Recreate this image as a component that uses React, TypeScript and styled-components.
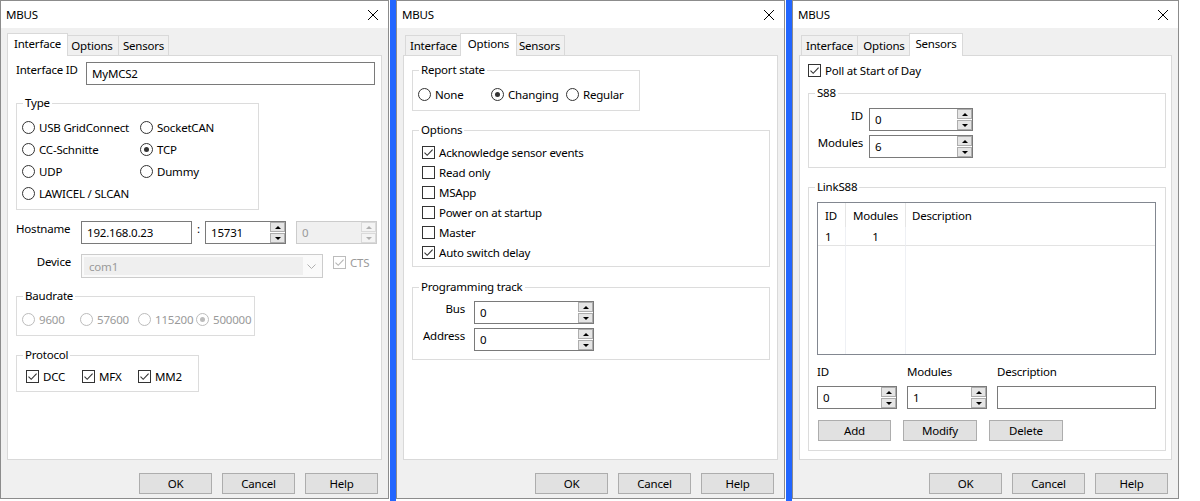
import React from "react";
import styled, { createGlobalStyle } from "styled-components";

const GlobalStyle = createGlobalStyle`
  html, body {
    margin: 0;
    padding: 0;
    background: #ffffff;
  }
  body {
    font-family: "Noto Sans", "Open Sans", sans-serif;
    font-size: 11.5px;
    letter-spacing: -0.2px;
    color: #000;
  }
  * {
    box-sizing: border-box;
  }
`;

const Screen = styled.div`
  display: flex;
  align-items: flex-start;
  width: 1200px;
  height: 501px;
  overflow: hidden;
  background: #fff;
`;

const AccentBar = styled.div`
  flex-shrink: 0;
  width: 6px;
  height: 501px;
  margin-left: 1px;
  background: #2266ff;
`;

const Window = styled.div<{ $width: number }>`
  flex-shrink: 0;
  width: ${(p) => p.$width}px;
  height: 499px;
  border: 1px solid #8c8c8c;
  background: #f0f0f0;
  display: flex;
  flex-direction: column;
`;

const TitleBar = styled.div`
  flex-shrink: 0;
  height: 27px;
  background: #fff;
  display: flex;
  align-items: center;
  justify-content: space-between;
  padding: 0 10px 0 5px;
`;

const TabStrip = styled.div`
  flex-shrink: 0;
  height: 22px;
  margin-top: 5px;
  padding-left: 8px;
  display: flex;
  align-items: flex-end;
`;

const Tab = styled.div<{ $active: boolean; $width: number }>`
  position: relative;
  z-index: ${(p) => (p.$active ? 1 : 0)};
  width: ${(p) => p.$width + (p.$active ? 4 : 0)}px;
  height: ${(p) => (p.$active ? 23 : 20)}px;
  margin: 0 ${(p) => (p.$active ? -2 : 0)}px ${(p) => (p.$active ? -1 : 0)}px;
  padding-bottom: ${(p) => (p.$active ? 3 : 0)}px;
  background: ${(p) => (p.$active ? "#fff" : "#f0f0f0")};
  border: 1px solid #d9d9d9;
  border-bottom: none;
  display: flex;
  align-items: center;
  justify-content: center;
  white-space: nowrap;

  &:not(:first-child) {
    border-left: ${(p) => (p.$active ? "1px solid #d9d9d9" : "none")};
  }
`;

const Panel = styled.div`
  flex-shrink: 0;
  height: 405px;
  margin: 0 6px;
  background: #fff;
  border: 1px solid #d9d9d9;
  padding: 6px 6px 0 8px;
  display: flex;
  flex-direction: column;
  align-items: flex-start;
`;

const ButtonRow = styled.div`
  display: flex;
  justify-content: flex-end;
  gap: 10px;
  padding: 13px 10px 0 0;
`;

const PushButton = styled.button<{ $width?: number }>`
  width: ${(p) => p.$width ?? 73}px;
  height: 21px;
  padding: 0;
  border: 1px solid #adadad;
  background: #e1e1e1;
  font: inherit;
  letter-spacing: inherit;
  color: #000;
`;

const Row = styled.div<{ $top?: number }>`
  display: flex;
  align-items: flex-start;
  margin-top: ${(p) => p.$top ?? 0}px;
`;

const FieldLabel = styled.span<{ $width: number; $right?: boolean; $gap?: number; $muted?: boolean }>`
  flex-shrink: 0;
  width: ${(p) => p.$width}px;
  margin-right: ${(p) => p.$gap ?? 0}px;
  line-height: 16px;
  text-align: ${(p) => (p.$right ? "right" : "left")};
  white-space: nowrap;
  color: ${(p) => (p.$muted ? "#9a9a9a" : "#000")};
`;

const TextBox = styled.div<{ $width?: number }>`
  flex-shrink: 0;
  width: ${(p) => (p.$width ? `${p.$width}px` : "auto")};
  height: 23px;
  border: 1px solid #7a7a7a;
  background: #fff;
  padding: 0 5px;
  display: flex;
  align-items: center;
  white-space: nowrap;
`;

const SpinFrame = styled.div<{ $width: number }>`
  flex-shrink: 0;
  width: ${(p) => p.$width}px;
  height: 23px;
  display: flex;
`;

const SpinValue = styled.div<{ $disabled?: boolean }>`
  flex: 1;
  border: 1px solid ${(p) => (p.$disabled ? "#cccccc" : "#7a7a7a")};
  border-right: none;
  background: ${(p) => (p.$disabled ? "#f0f0f0" : "#fff")};
  color: ${(p) => (p.$disabled ? "#9a9a9a" : "#000")};
  padding-left: 5px;
  display: flex;
  align-items: center;
`;

const SpinButtons = styled.div<{ $disabled?: boolean }>`
  width: 16px;
  display: flex;
  flex-direction: column;
  gap: 1px;
  border: 1px solid ${(p) => (p.$disabled ? "#cccccc" : "#7a7a7a")};
  border-left: none;
  background: ${(p) => (p.$disabled ? "#f0f0f0" : "#fff")};
`;

const SpinButton = styled.span<{ $disabled?: boolean }>`
  flex: 1;
  display: flex;
  align-items: center;
  justify-content: center;
  border: 1px solid ${(p) => (p.$disabled ? "#dadada" : "#adadad")};
  background: ${(p) => (p.$disabled ? "#f4f4f4" : "#e5e5e5")};
`;

const Arrow = styled.span<{ $down?: boolean; $disabled?: boolean }>`
  width: 0;
  height: 0;
  border-left: 3px solid transparent;
  border-right: 3px solid transparent;
  ${(p) =>
    p.$down
      ? `border-top: 3px solid ${p.$disabled ? "#b0b0b0" : "#000"};`
      : `border-bottom: 3px solid ${p.$disabled ? "#b0b0b0" : "#000"};`}
`;

const Colon = styled.span`
  flex-shrink: 0;
  width: 13px;
  line-height: 16px;
  text-align: center;
`;

const ComboFrame = styled.div<{ $width: number }>`
  flex-shrink: 0;
  width: ${(p) => p.$width}px;
  height: 24px;
  border: 1px solid #cccccc;
  background: #fafafa;
  padding: 2px;
  display: flex;
`;

const ComboText = styled.div`
  flex: 1;
  background: #efefef;
  color: #9a9a9a;
  padding-left: 5px;
  display: flex;
  align-items: center;
`;

const ComboArrow = styled.div`
  width: 17px;
  display: flex;
  align-items: center;
  justify-content: center;
`;

const Group = styled.fieldset<{ $width?: number; $top?: number }>`
  margin: ${(p) => p.$top ?? 0}px 0 0;
  padding: 0;
  min-width: 0;
  width: ${(p) => (p.$width ? `${p.$width}px` : "auto")};
  border: 1px solid #dcdcdc;
`;

const GroupTitle = styled.legend`
  margin-left: 6px;
  padding: 0 2px;
  line-height: 16px;
`;

const GroupBody = styled.div<{ $pad: string }>`
  padding: ${(p) => p.$pad};
`;

const ChoiceGrid = styled.div<{ $cols: string; $row: number }>`
  display: grid;
  grid-template-columns: ${(p) => p.$cols};
  grid-auto-rows: ${(p) => p.$row}px;
`;

const Choice = styled.div<{ $disabled?: boolean; $height?: number }>`
  display: flex;
  align-items: center;
  gap: 4px;
  height: ${(p) => (p.$height ? `${p.$height}px` : "100%")};
  white-space: nowrap;
  color: ${(p) => (p.$disabled ? "#9a9a9a" : "#000")};
`;

const RadioCircle = styled.span<{ $checked?: boolean; $disabled?: boolean }>`
  flex-shrink: 0;
  width: 13px;
  height: 13px;
  border-radius: 50%;
  border: 1px solid ${(p) => (p.$disabled ? "#bcbcbc" : "#333")};
  background: #fff;
  display: flex;
  align-items: center;
  justify-content: center;

  &::after {
    content: "";
    display: ${(p) => (p.$checked ? "block" : "none")};
    width: 5px;
    height: 5px;
    border-radius: 50%;
    background: ${(p) => (p.$disabled ? "#bcbcbc" : "#333")};
  }
`;

const CheckSquare = styled.span<{ $disabled?: boolean }>`
  flex-shrink: 0;
  width: 13px;
  height: 13px;
  border: 1px solid ${(p) => (p.$disabled ? "#bcbcbc" : "#333")};
  background: #fff;
  display: flex;
  align-items: center;
  justify-content: center;
`;

const ListView = styled.div`
  width: 100%;
  height: 153px;
  border: 1px solid #828790;
  background: #fff;
  display: grid;
  grid-template-columns: 28px 60px 1fr;
  grid-template-rows: 24px 19px 1fr;
`;

const HeadCell = styled.div<{ $last?: boolean }>`
  padding-left: ${(p) => (p.$last ? 6 : 7)}px;
  display: flex;
  align-items: center;
  white-space: nowrap;
  border-right: ${(p) => (p.$last ? "none" : "1px solid #e5e5e5")};
`;

const DataCell = styled.div<{ $center?: boolean; $last?: boolean }>`
  padding-left: ${(p) => (p.$center ? 0 : 7)}px;
  display: flex;
  align-items: center;
  justify-content: ${(p) => (p.$center ? "center" : "flex-start")};
  border-bottom: 1px solid #e3e3e3;
  border-right: ${(p) => (p.$last ? "none" : "1px solid #eef0f4")};
`;

const FillCell = styled.div<{ $last?: boolean }>`
  border-right: ${(p) => (p.$last ? "none" : "1px solid #eef0f4")};
`;

const EntryGrid = styled.div`
  display: grid;
  grid-template-columns: 80px 80px 1fr;
  column-gap: 10px;
  row-gap: 6px;
  margin-top: 9px;
`;

const EntryLabel = styled.span`
  line-height: 16px;
`;

const ActionRow = styled.div`
  display: flex;
  gap: 12px;
  margin: 11px 0 0 1px;
`;

const CheckMark = ({ disabled }: { disabled?: boolean }) => (
  <svg width="11" height="11" viewBox="0 0 11 11">
    <path d="M1.5 5.6 L4.2 8.3 L9.6 2.6" fill="none" stroke={disabled ? "#b5b5b5" : "#333"} strokeWidth="1.1" />
  </svg>
);

const CloseIcon = () => (
  <svg width="10" height="10" viewBox="0 0 10 10">
    <path d="M0 0 L10 10 M10 0 L0 10" stroke="#000" strokeWidth="1" />
  </svg>
);

const Radio = ({ label, checked, disabled }: { label: string; checked?: boolean; disabled?: boolean }) => (
  <Choice $disabled={disabled}>
    <RadioCircle $checked={checked} $disabled={disabled} />
    {label}
  </Choice>
);

const CheckBox = ({
  label,
  checked,
  disabled,
  height,
}: {
  label: string;
  checked?: boolean;
  disabled?: boolean;
  height?: number;
}) => (
  <Choice $disabled={disabled} $height={height}>
    <CheckSquare $disabled={disabled}>{checked && <CheckMark disabled={disabled} />}</CheckSquare>
    {label}
  </Choice>
);

const Spin = ({ value, width, disabled }: { value: string; width: number; disabled?: boolean }) => (
  <SpinFrame $width={width}>
    <SpinValue $disabled={disabled}>{value}</SpinValue>
    <SpinButtons $disabled={disabled}>
      <SpinButton $disabled={disabled}>
        <Arrow $disabled={disabled} />
      </SpinButton>
      <SpinButton $disabled={disabled}>
        <Arrow $down $disabled={disabled} />
      </SpinButton>
    </SpinButtons>
  </SpinFrame>
);

const TABS = [
  { name: "Interface", width: 57 },
  { name: "Options", width: 53 },
  { name: "Sensors", width: 50 },
];

const Dialog = ({ width, active, children }: { width: number; active: string; children: React.ReactNode }) => (
  <Window $width={width}>
    <TitleBar>
      <span>MBUS</span>
      <CloseIcon />
    </TitleBar>
    <TabStrip>
      {TABS.map((t) => (
        <Tab key={t.name} $active={t.name === active} $width={t.width}>
          {t.name}
        </Tab>
      ))}
    </TabStrip>
    <Panel>{children}</Panel>
    <ButtonRow>
      <PushButton>OK</PushButton>
      <PushButton>Cancel</PushButton>
      <PushButton>Help</PushButton>
    </ButtonRow>
  </Window>
);

const InterfacePage = () => (
  <>
    <Row>
      <FieldLabel $width={70}>Interface ID</FieldLabel>
      <TextBox $width={289}>MyMCS2</TextBox>
    </Row>
    <Group $width={243} $top={10}>
      <GroupTitle>Type</GroupTitle>
      <GroupBody $pad="5px 0 5px 5px">
        <ChoiceGrid $cols="118px 1fr" $row={22}>
          <Radio label="USB GridConnect" />
          <Radio label="SocketCAN" />
          <Radio label="CC-Schnitte" />
          <Radio label="TCP" checked />
          <Radio label="UDP" />
          <Radio label="Dummy" />
          <Radio label="LAWICEL / SLCAN" />
        </ChoiceGrid>
      </GroupBody>
    </Group>
    <Row $top={11}>
      <FieldLabel $width={65}>Hostname</FieldLabel>
      <TextBox $width={111}>192.168.0.23</TextBox>
      <Colon>:</Colon>
      <Spin value="15731" width={81} />
      <FieldLabel $width={10} />
      <Spin value="0" width={81} disabled />
    </Row>
    <Row $top={10}>
      <FieldLabel $width={55} $right $gap={10}>
        Device
      </FieldLabel>
      <ComboFrame $width={242}>
        <ComboText>com1</ComboText>
        <ComboArrow>
          <svg width="9" height="5" viewBox="0 0 9 5">
            <path d="M0.5 0.5 L4.5 4.5 L8.5 0.5" fill="none" stroke="#b0b0b0" strokeWidth="1" />
          </svg>
        </ComboArrow>
      </ComboFrame>
      <FieldLabel $width={10} />
      <CheckBox label="CTS" checked disabled height={16} />
    </Row>
    <Group $width={239} $top={10}>
      <GroupTitle>Baudrate</GroupTitle>
      <GroupBody $pad="5px 0 6px 5px">
        <ChoiceGrid $cols="58px 58px 58px 1fr" $row={20}>
          <Radio label="9600" disabled />
          <Radio label="57600" disabled />
          <Radio label="115200" disabled />
          <Radio label="500000" checked disabled />
        </ChoiceGrid>
      </GroupBody>
    </Group>
    <Group $width={183} $top={11}>
      <GroupTitle>Protocol</GroupTitle>
      <GroupBody $pad="3px 0 5px 9px">
        <ChoiceGrid $cols="56px 56px 1fr" $row={20}>
          <CheckBox label="DCC" checked />
          <CheckBox label="MFX" checked />
          <CheckBox label="MM2" checked />
        </ChoiceGrid>
      </GroupBody>
    </Group>
  </>
);

const OptionsPage = () => (
  <>
    <Group $width={228}>
      <GroupTitle>Report state</GroupTitle>
      <GroupBody $pad="6px 0 6px 5px">
        <ChoiceGrid $cols="73px 75px 1fr" $row={20}>
          <Radio label="None" />
          <Radio label="Changing" checked />
          <Radio label="Regular" />
        </ChoiceGrid>
      </GroupBody>
    </Group>
    <Group $width={358} $top={11}>
      <GroupTitle>Options</GroupTitle>
      <GroupBody $pad="4px 0 4px 9px">
        <ChoiceGrid $cols="1fr" $row={20}>
          <CheckBox label="Acknowledge sensor events" checked />
          <CheckBox label="Read only" />
          <CheckBox label="MSApp" />
          <CheckBox label="Power on at startup" />
          <CheckBox label="Master" />
          <CheckBox label="Auto switch delay" checked />
        </ChoiceGrid>
      </GroupBody>
    </Group>
    <Group $width={358} $top={12}>
      <GroupTitle>Programming track</GroupTitle>
      <GroupBody $pad="6px 0 8px 8px">
        <Row>
          <FieldLabel $width={44} $right $gap={9}>
            Bus
          </FieldLabel>
          <Spin value="0" width={120} />
        </Row>
        <Row $top={4}>
          <FieldLabel $width={44} $right $gap={9}>
            Address
          </FieldLabel>
          <Spin value="0" width={120} />
        </Row>
      </GroupBody>
    </Group>
  </>
);

const SensorsPage = () => (
  <>
    <CheckBox label="Poll at Start of Day" checked height={16} />
    <Group $width={358} $top={7}>
      <GroupTitle>S88</GroupTitle>
      <GroupBody $pad="7px 0 9px 8px">
        <Row>
          <FieldLabel $width={46} $right $gap={6}>
            ID
          </FieldLabel>
          <Spin value="0" width={104} />
        </Row>
        <Row $top={4}>
          <FieldLabel $width={46} $right $gap={6}>
            Modules
          </FieldLabel>
          <Spin value="6" width={104} />
        </Row>
      </GroupBody>
    </Group>
    <Group $width={358} $top={11}>
      <GroupTitle>LinkS88</GroupTitle>
      <GroupBody $pad="7px 9px 9px 8px">
        <ListView>
          <HeadCell>ID</HeadCell>
          <HeadCell>Modules</HeadCell>
          <HeadCell $last>Description</HeadCell>
          <DataCell>1</DataCell>
          <DataCell $center>1</DataCell>
          <DataCell $last />
          <FillCell />
          <FillCell />
          <FillCell $last />
        </ListView>
        <EntryGrid>
          <EntryLabel>ID</EntryLabel>
          <EntryLabel>Modules</EntryLabel>
          <EntryLabel>Description</EntryLabel>
          <Spin value="0" width={80} />
          <Spin value="1" width={80} />
          <TextBox />
        </EntryGrid>
        <ActionRow>
          <PushButton>Add</PushButton>
          <PushButton $width={74}>Modify</PushButton>
          <PushButton $width={74}>Delete</PushButton>
        </ActionRow>
      </GroupBody>
    </Group>
  </>
);

export default function App() {
  return (
    <>
      <GlobalStyle />
      <Screen>
        <Dialog width={389} active="Interface">
          <InterfacePage />
        </Dialog>
        <AccentBar />
        <Dialog width={389} active="Options">
          <OptionsPage />
        </Dialog>
        <AccentBar />
        <Dialog width={387} active="Sensors">
          <SensorsPage />
        </Dialog>
      </Screen>
    </>
  );
}
